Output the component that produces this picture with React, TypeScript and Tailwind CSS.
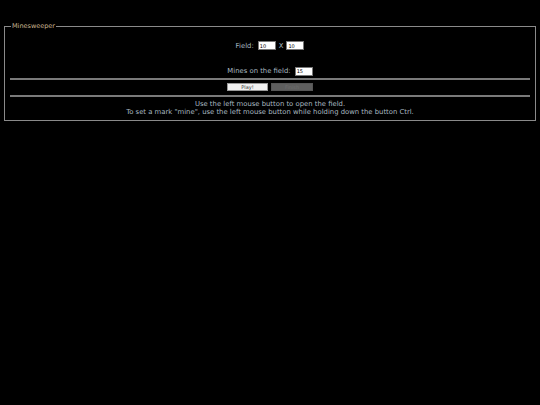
import { useState } from "react";

const App = () => {
  const [cols, setCols] = useState("10");
  const [rows, setRows] = useState("10");
  const [mines, setMines] = useState("15");

  return (
    <div className="min-h-[405px] bg-black px-[4px] pt-[22px] font-['DejaVu_Sans',Verdana,sans-serif] text-[6.85px] text-[#a9b9c1]">
      <fieldset className="border border-[#8a8a8a] px-[5px] pb-[4px]">
        <legend className="ml-[1px] px-[1px] text-[6.5px] text-[#cbb892]">Minesweeper</legend>

        {/* Field size */}
        <div className="flex items-center justify-center gap-[3px] pt-[9px]">
          <span className="mr-[1px]">Field:</span>
          <input
            value={cols}
            onChange={(e) => setCols(e.target.value)}
            className="h-[9px] w-[18px] border border-[#777] bg-white px-[1px] text-[5px] leading-none text-black outline-none"
          />
          <span>X</span>
          <input
            value={rows}
            onChange={(e) => setRows(e.target.value)}
            className="h-[9px] w-[18px] border border-[#777] bg-white px-[1px] text-[5px] leading-none text-black outline-none"
          />
        </div>

        {/* Mines */}
        <div className="mt-[15px] flex items-center justify-center gap-[3px]">
          <span className="mr-[1px]">Mines on the field:</span>
          <input
            value={mines}
            onChange={(e) => setMines(e.target.value)}
            className="h-[9px] w-[18px] border border-[#777] bg-white px-[1px] text-[5px] leading-none text-black outline-none"
          />
        </div>

        <div className="mt-[2px] h-[2px] bg-[#7a7a7a]" />

        {/* Controls */}
        <div className="flex justify-center gap-[3px] pt-[3px] pb-[4px]">
          <button className="h-[8px] w-[41px] border border-[#999] bg-[#f0f0f0] text-[5px] leading-none text-[#333]">
            Play!
          </button>
          <button disabled className="h-[8px] w-[42px] border border-[#555] bg-[#5e5e5e] text-[5px] leading-none text-[#6e6e6e]">
            Finish
          </button>
        </div>

        <div className="h-[2px] bg-[#7a7a7a]" />

        <div className="pt-[3px] text-center leading-[8px]">
          <p>Use the left mouse button to open the field.</p>
          <p>To set a mark "mine", use the left mouse button while holding down the button Ctrl.</p>
        </div>
      </fieldset>
    </div>
  );
};

export default App;
